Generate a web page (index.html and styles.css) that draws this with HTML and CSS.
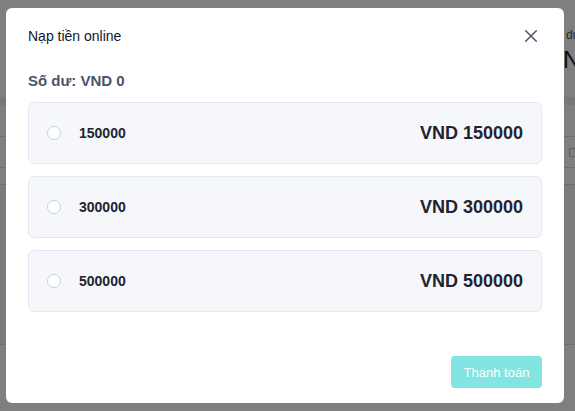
FILE: index.html
```html
<!DOCTYPE html>
<html lang="vi">
<head>
<meta charset="utf-8">
<title>Nạp tiền online</title>
<link rel="stylesheet" href="styles.css">
</head>
<body>
<div class="page">
  <div class="page-head">
    <div class="page-left">Chi tiết</div>
    <div class="page-right">
      <div class="page-right-label">Số dư</div>
      <div class="page-right-value">VND 0</div>
    </div>
  </div>
  <div class="page-band"></div>
  <div class="page-row page-row-a"></div>
  <div class="page-row page-row-b">
    <span class="page-cal"></span>
  </div>
  <div class="page-row page-row-c"></div>
  <div class="page-row page-row-d"></div>
</div>
<div class="overlay"></div>
<div class="modal" role="dialog" aria-label="Nạp tiền online">
  <div class="modal-header">
    <h2 class="modal-title">Nạp tiền online</h2>
    <button class="modal-close" aria-label="Đóng">
      <svg width="12" height="12" viewBox="0 0 12 12"><path d="M0.7 0.7L11.3 11.3M11.3 0.7L0.7 11.3" stroke="#4a5568" stroke-width="1.5" stroke-linecap="round" fill="none"/></svg>
    </button>
  </div>
  <div class="balance">Số dư: VND 0</div>
  <div class="options">
    <label class="option">
      <span class="radio"></span>
      <span class="option-label">150000</span>
      <span class="option-amount">VND 150000</span>
    </label>
    <label class="option">
      <span class="radio"></span>
      <span class="option-label">300000</span>
      <span class="option-amount">VND 300000</span>
    </label>
    <label class="option">
      <span class="radio"></span>
      <span class="option-label">500000</span>
      <span class="option-amount">VND 500000</span>
    </label>
  </div>
  <div class="modal-footer">
    <button class="pay-btn" disabled>Thanh toán</button>
  </div>
</div>
</body>
</html>
```
FILE: styles.css
```css
* { box-sizing: border-box; }
html, body {
  margin: 0;
  padding: 0;
  width: 575px;
  height: 411px;
  overflow: hidden;
  background: #ffffff;
  font-family: "Liberation Sans", Arial, Helvetica, sans-serif;
}

/* background page (dimmed) */
.page {
  width: 575px;
  height: 411px;
  background: #ffffff;
}
.page-head {
  height: 97px;
  display: flex;
  justify-content: space-between;
  padding-top: 28px;
}
.page-left {
  margin-left: -38px;
  font-size: 12px;
  color: #4a5568;
}
.page-right {
  width: 12px;
  overflow: hidden;
  white-space: nowrap;
}
.page-right-label {
  font-size: 12px;
  color: #4a5568;
  margin-left: -15px;
}
.page-right-value {
  font-size: 24px;
  color: #1a202c;
  margin-top: 4px;
  margin-left: -16px;
}
.page-band {
  height: 8px;
  background: #edeef0;
}
.page-row {
  border-bottom: 1px solid #dcdde0;
}
.page-row-a { height: 32px; }
.page-row-b {
  height: 31px;
  display: flex;
  justify-content: flex-end;
  align-items: center;
}
.page-cal {
  width: 9px;
  height: 9px;
  border: 1px solid #b8bcc4;
  border-radius: 1px;
  margin-right: -3px;
}
.page-row-c { height: 17px; }
.page-row-d {
  height: 160px;
  background: #f7f7f8;
}

.overlay {
  position: fixed;
  inset: 0;
  background: rgba(0, 0, 0, 0.5);
}

/* modal */
.modal {
  position: fixed;
  left: 6px;
  top: 8px;
  width: 558px;
  height: 395px;
  background: #ffffff;
  border-radius: 6px;
  padding: 0 22px;
  display: flex;
  flex-direction: column;
}
.modal-header {
  height: 56px;
  display: flex;
  align-items: center;
  justify-content: space-between;
}
.modal-title {
  margin: 0;
  font-size: 14px;
  font-weight: normal;
  line-height: 20px;
  color: #111827;
}
.modal-close {
  border: 0;
  background: none;
  padding: 0;
  width: 12px;
  height: 12px;
  margin-right: 5px;
  display: flex;
}
.balance {
  margin-top: 7px;
  font-size: 15px;
  font-weight: bold;
  line-height: 20px;
  color: #4a5568;
}
.options {
  margin-top: 11px;
  display: flex;
  flex-direction: column;
  gap: 12px;
}
.option {
  height: 62px;
  border: 1px solid #e3e9f2;
  background: #f6f7fb;
  border-radius: 6px;
  display: flex;
  align-items: center;
  padding: 0 18px;
}
.radio {
  width: 14px;
  height: 14px;
  border: 1px solid #c5d4e8;
  border-radius: 50%;
  background: #ffffff;
  flex: none;
}
.option-label {
  margin-left: 18px;
  font-size: 14px;
  font-weight: bold;
  color: #1f2430;
}
.option-amount {
  margin-left: auto;
  font-size: 18px;
  font-weight: bold;
  color: #1f2430;
}
.modal-footer {
  margin-top: 44px;
  display: flex;
  justify-content: flex-end;
}
.pay-btn {
  width: 91px;
  height: 32px;
  border: 0;
  border-radius: 4px;
  background: #82e5e2;
  color: #ffffff;
  font-family: "Liberation Sans", Arial, Helvetica, sans-serif;
  font-size: 13px;
  padding: 0;
}
```
